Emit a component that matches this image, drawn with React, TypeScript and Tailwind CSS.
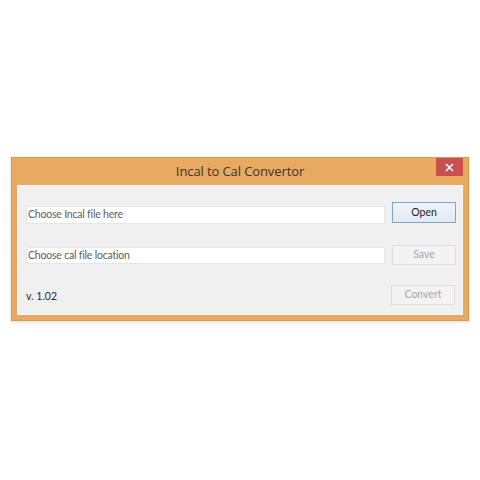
import React from "react";

export default function App() {
  const font = { fontFamily: '"Open Sans", "Noto Sans", sans-serif' };
  const small = { fontFamily: 'Lato, "Open Sans", sans-serif' };
  return (
    <div className="w-[480px] h-[480px] bg-white pt-[157px] pl-[11px]" style={font}>
      <div className="w-[458px] bg-[#e8a960] border border-[#d9984f] px-[5px] pb-[5px] shadow-[0_1px_3px_rgba(0,0,0,0.15)]">
        <div className="h-[27px] grid grid-cols-[1fr_auto_1fr] items-start">
          <div />
          <div className="text-[13px] leading-none text-[#3b3530] mt-[7px] tracking-[-0.1px]">Incal to Cal Convertor</div>
          <div className="flex justify-end">
            <div className="w-[27px] h-[18px] bg-[#c9504f] flex items-center justify-center">
              <svg width="9" height="9" viewBox="0 0 9 9">
                <path d="M1 1 L8 8 M8 1 L1 8" stroke="white" strokeWidth="1.6" />
              </svg>
            </div>
          </div>
        </div>
        <div className="bg-[#f0f0f0] border border-[#f7f7f7] pt-[16px] pb-[9px] pl-[8px] pr-[6px] flex flex-col" style={small}>
          <div className="flex items-start gap-[7px]">
            <div className="w-[359px] h-[18px] mt-[4px] bg-white border border-[#e6e6e6] flex items-center pl-[1px] text-[10.5px] tracking-[-0.2px] text-[#5c5c5c]">
              Choose Incal file here
            </div>
            <div className="w-[64px] h-[21px] border border-[#7aa8d6] bg-[linear-gradient(#eef3f8,#e2eaf2)] flex items-center justify-center text-[10.5px] text-[#1e1e1e]">
              Open
            </div>
          </div>
          <div className="flex items-start gap-[7px] mt-[21px]">
            <div className="w-[359px] h-[17px] mt-[2px] bg-white border border-[#e6e6e6] flex items-center pl-[1px] text-[10.5px] tracking-[-0.2px] text-[#5c5c5c]">
              Choose cal file location
            </div>
            <div className="w-[64px] h-[20px] border border-[#dddddd] bg-[#f3f3f3] flex items-center justify-center text-[10.5px] text-[#a6a6a6]">
              Save
            </div>
          </div>
          <div className="flex items-end justify-between mt-[20px]">
            <div className="text-[10.5px] text-[#2a2a2a] leading-none mb-[4px] pl-[0px]">v. 1.02</div>
            <div className="w-[64px] h-[20px] border border-[#dddddd] bg-[#f3f3f3] flex items-center justify-center text-[10.5px] text-[#a6a6a6] mr-[1px]">
              Convert
            </div>
          </div>
        </div>
      </div>
    </div>
  );
}
